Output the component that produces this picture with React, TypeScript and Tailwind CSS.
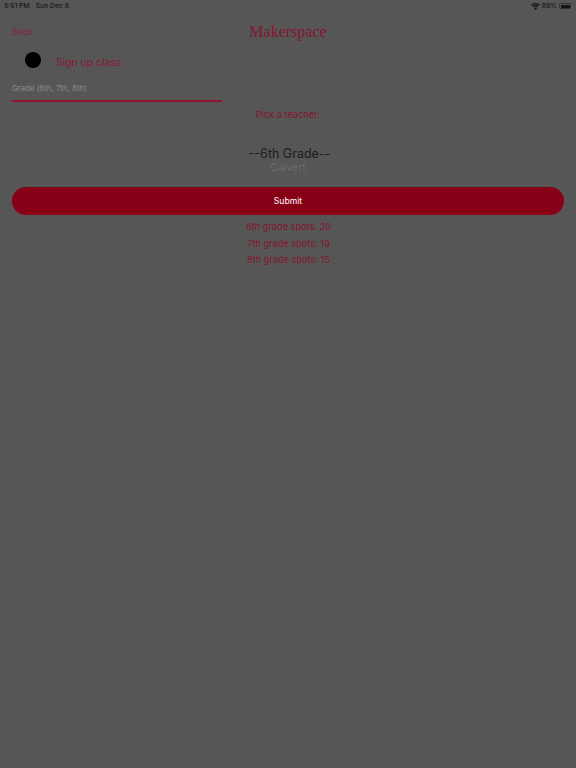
export default function App() {
  const sans = { fontFamily: 'Inter, "Liberation Sans", sans-serif' };
  return (
    <div className="w-[576px] h-[768px] overflow-hidden bg-[#565656] flex flex-col" style={sans}>
      <div className="h-[12px] flex items-center justify-between pl-[4px] pr-[5px] text-[6.8px] leading-[12px] text-[#161616] font-medium">
        <div className="flex gap-[6px]"><span>5:51 PM</span><span>Sun Dec 8</span></div>
        <div className="flex items-center gap-[2px]">
          <svg width="9" height="7" viewBox="0 0 18 14" fill="#161616"><path d="M9 14l-3-3.6a4.6 4.6 0 0 1 6 0zM4.6 8.7L3 6.8a9.2 9.2 0 0 1 12 0l-1.600 1.900a6.800 6.800 0 0 0-8.800 0zM1.700 5.300L0 3.400a13.800 13.800 0 0 1 18 0l-1.700 1.900a11.400 11.400 0 0 0-14.600 0z" /></svg>
          <span>89%</span>
          <div className="w-[12px] h-[6px] border-[0.5px] border-[#333] rounded-[1px] p-[0.5px]"><div className="w-[9px] h-full bg-[#161616]" /></div>
        </div>
      </div>
      <div className="h-[40px] px-[12px] flex items-center relative">
        <span className="text-[9px] text-[#85243c] mt-[-1px]">Back</span>
        <span className="absolute left-0 right-0 text-center text-[16px] text-[#85152f] font-['Liberation_Serif',serif]">Makerspace</span>
      </div>
      <div className="h-[16px] flex items-center pl-[25px]">
        <div className="w-[16px] h-[16px] rounded-full bg-black" />
        <span className="ml-[15px] text-[10.4px] mt-[5px] text-[#8a1631]">Sign up class</span>
      </div>
      <div className="ml-[12px] w-[210px] pt-[13px] text-[7.8px] leading-[14px] text-[#8a8a8a]">Grade (6th, 7th, 8th)</div>
      <div className="ml-[12px] w-[210px] h-[2px] mt-[5px] bg-[#8f1531]" />
      <div className="mt-[7px] text-center text-[9.2px] leading-[12px] text-[#85152f]">Pick a teacher:</div>
      <div className="mt-[25px] pl-[3px] text-center text-[12.5px] leading-[16px] text-[#1c1c1c]">--6th Grade--</div>
      <div className="text-center text-[10.5px] leading-[12px] text-[#6c6c6c]">Calvert</div>
      <button className="mx-[12px] mt-[13px] h-[28px] rounded-[14px] bg-[#870016] text-white text-[8.6px] shrink-0">Submit</button>
      <div className="mt-[4px] pl-[1px] flex flex-col items-center text-[9.2px] leading-[16.5px] text-[#85152f]">
        <span>6th grade spots: 20</span>
        <span>7th grade spots: 19</span>
        <span>8th grade spots: 15</span>
      </div>
    </div>
  );
}
